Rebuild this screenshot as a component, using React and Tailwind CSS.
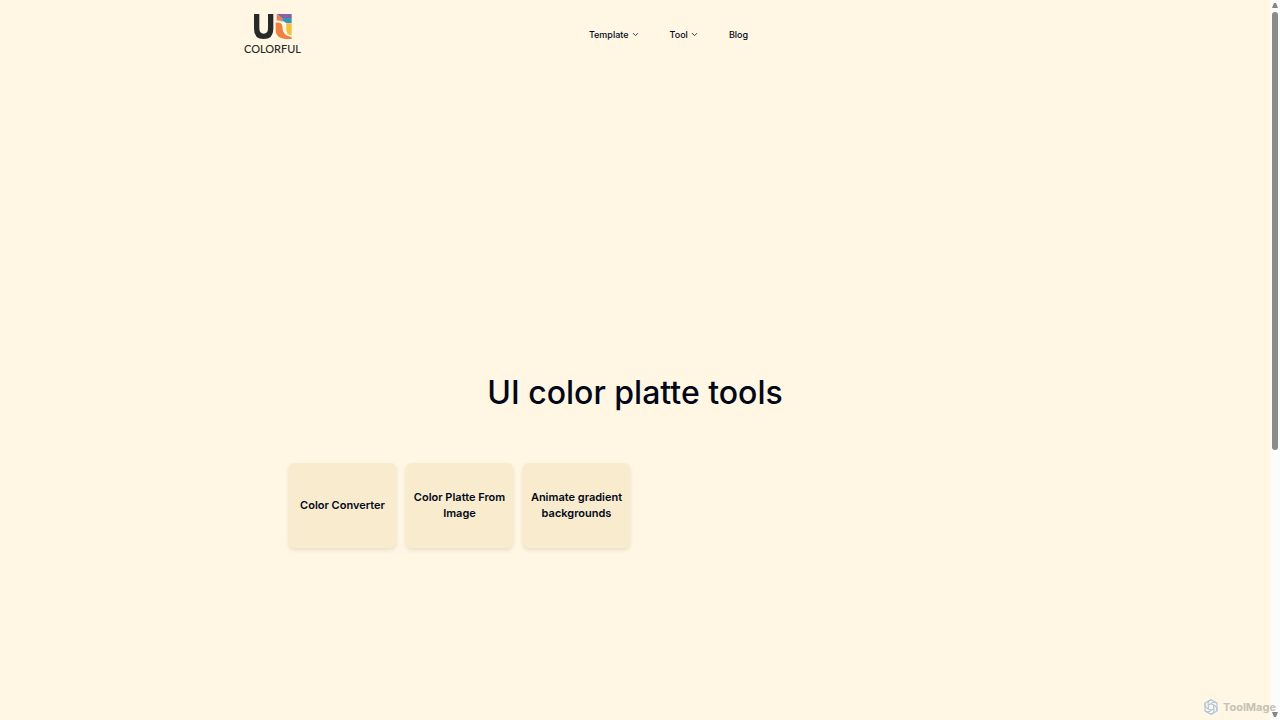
import React from "react";
import { ChevronDown } from "lucide-react";

const tools = ["Color Converter", "Color Platte From Image", "Animate gradient backgrounds"];

function Logo() {
  return (
    <a href="#" aria-label="Colorful home" className="flex w-[67px] flex-col items-center text-[#292b2a]">
      <svg viewBox="0 0 114 75" className="h-[25px] w-[38px]" aria-hidden="true">
        <path d="M0 0h16v43q0 16 13 16t13-16V0h16v44q0 31-29 31T0 44Z" fill="#282a29" />
        <path d="M68 0h45v13H84Z" fill="#8b629d" />
        <path d="M68 0l17 13v10q-8-4-17-3Z" fill="#e98254" />
        <path d="M85 12h28v15H96q-3-5-11-6Z" fill="#3595bb" />
        <path d="M97 28h16v36q-16-2-16-17Z" fill="#f2c239" />
        <path d="M65 26q19-3 20 12 0 27 28 31v6H98q-33 0-33-29Z" fill="#ed8140" />
      </svg>
      <span className="mt-1 font-['Lato',sans-serif] text-[11px] leading-3 font-medium">COLORFUL</span>
    </a>
  );
}

function NavMenu({ label }) {
  return (
    <button type="button" className="flex items-center gap-[2px]">
      {label}
      <ChevronDown className="size-[9px]" strokeWidth={2} aria-hidden="true" />
    </button>
  );
}

function Scrollbar() {
  return (
    <div className="flex w-[10px] shrink-0 flex-col items-center justify-between bg-[#fcfcfc] py-[3px]" aria-hidden="true">
      <svg viewBox="0 0 6 5" className="h-[5px] w-[6px]"><path d="M2 0h2l2 5H0Z" fill="#858585" /></svg>
      <div className="flex w-[6px] grow flex-col py-1">
        <div className="h-[63%] rounded-full bg-[#8b8b8b]" />
      </div>
      <svg viewBox="0 0 6 5" className="h-[5px] w-[6px]"><path d="M0 0h6L4 5H2Z" fill="#858585" /></svg>
    </div>
  );
}

function Watermark() {
  return (
    <div className="absolute right-1 bottom-[3px] flex items-center gap-1 text-[#c6c1b5]">
      <svg viewBox="0 0 24 24" className="size-4" fill="none" stroke="#afc3de" strokeWidth="1.7" aria-hidden="true">
        <path d="M12 1l9 5v12l-9 5-9-5V6Z" />
        <path d="M12 7l4 2v6l-4 2-4-2V9Z" />
        <path d="M12 1q-6 2-4 8M21 6q-5-3-9 1M21 18q1-6-5-9M12 23q6-2 4-8M3 18q5 3 9-1M3 6q-1 6 5 9" />
      </svg>
      <span className="font-['Inter',sans-serif] text-[11px] leading-5 font-bold">ToolMage</span>
    </div>
  );
}

export default function App() {
  return (
    <div className="relative flex min-h-screen bg-[#fff6e4] font-['Inter',sans-serif] text-[#020817]">
      <div className="min-w-0 grow">
        <header className="mx-auto flex max-w-[792px] items-center pt-[14px]">
          <Logo />
          <nav className="mx-auto flex items-center gap-[30px] text-[9px] leading-4 font-medium">
            <NavMenu label="Template" />
            <NavMenu label="Tool" />
            <a href="#">Blog</a>
          </nav>
        </header>
        <main className="px-6 pt-[318px]">
          <h1 className="text-center text-[32px] leading-10 font-medium">UI color platte tools</h1>
          <div className="mx-auto mt-[50px] grid max-w-[692px] grid-cols-6 gap-[10px]">
            {tools.map((tool) => (
              <a
                key={tool}
                href="#"
                className="flex h-[85px] items-center justify-center rounded-md bg-[#f8ebce] px-1 pb-[2px] text-center text-[11px] leading-4 font-semibold shadow-[0_2px_4px_rgba(90,70,20,0.14)]"
              >
                {tool}
              </a>
            ))}
          </div>
        </main>
      </div>
      <Scrollbar />
      <Watermark />
    </div>
  );
}
